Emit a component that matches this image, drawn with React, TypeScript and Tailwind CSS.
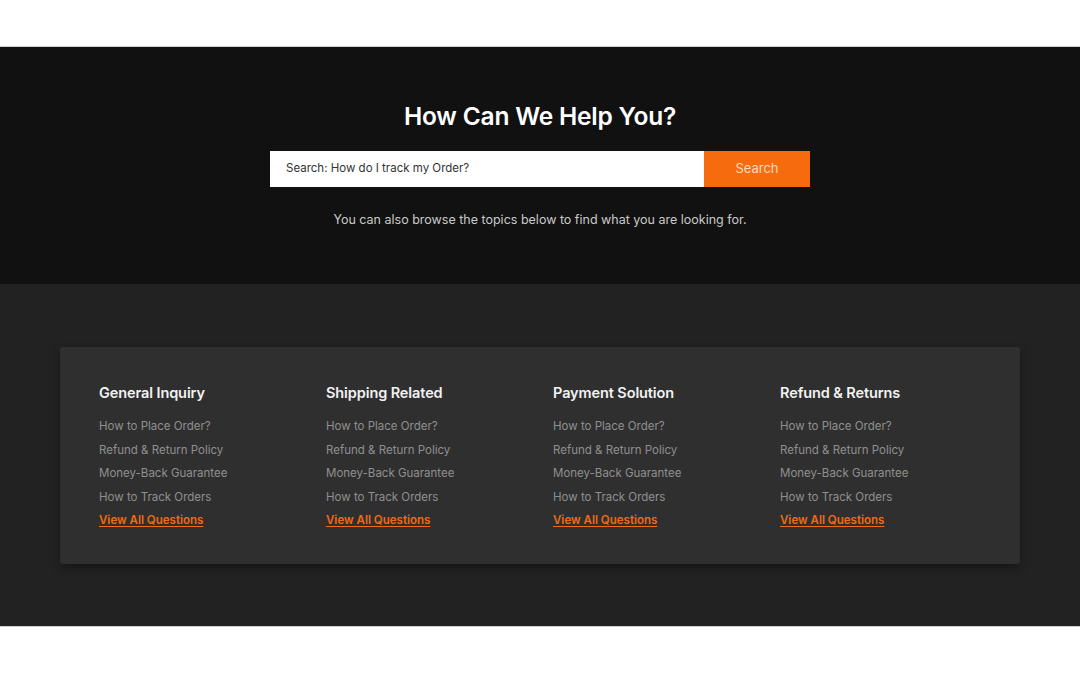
import React from 'react'

const columns = [
  { title: 'General Inquiry' },
  { title: 'Shipping Related' },
  { title: 'Payment Solution' },
  { title: 'Refund & Returns' },
]

const links = ['How to Place Order?', 'Refund & Return Policy', 'Money-Back Guarantee', 'How to Track Orders']

export default function App() {
  return (
    <div className="w-[1080px] h-[675px] bg-white flex flex-col font-['Inter','Noto_Sans',sans-serif]">
      <div className="h-[47px] border-b border-[#d0d0d0]" />

      {/* Hero */}
      <section className="h-[237px] bg-[#111111] flex flex-col items-center pt-[54px]">
        <h1 className="text-white text-[24.5px] leading-[30px] font-semibold tracking-[-0.2px]">How Can We Help You?</h1>
        <div className="mt-[20px] flex w-[540px] h-[36px]">
          <div className="flex-1 bg-white flex items-center pl-[16px] text-[11.5px] text-[#333333]">
            Search: How do I track my Order?
          </div>
          <button className="w-[106px] bg-[#f76b0f] text-[#ffd9bd] text-[13px]">Search</button>
        </div>
        <p className="mt-[24px] text-[12.5px] text-[#c9c9c9]">
          You can also browse the topics below to find what you are looking for.
        </p>
      </section>

      {/* Topics */}
      <section className="h-[342px] bg-[#222222] pt-[63px] px-[60px]">
        <div className="h-[217px] bg-[#2f2f2f] rounded-[3px] shadow-[0_4px_10px_rgba(0,0,0,0.35)] pl-[39px] pt-[37px] grid grid-cols-[repeat(4,227px)]">
          {columns.map((col) => (
            <div key={col.title} className="flex flex-col">
              <h3 className="text-[#f2f2f2] text-[14.5px] leading-[18px] font-semibold tracking-[-0.1px]">{col.title}</h3>
              <ul className="mt-[16px] flex flex-col gap-[7px]">
                {links.map((l) => (
                  <li key={l} className="text-[11.5px] leading-[16.5px] text-[#8f8f8f]">{l}</li>
                ))}
                <li className="text-[11.5px] leading-[16.5px] font-semibold text-[#f26a12] underline underline-offset-2">
                  View All Questions
                </li>
              </ul>
            </div>
          ))}
        </div>
      </section>

      <div className="flex-1 bg-white border-t border-[#cfcfcf]" />
    </div>
  )
}
